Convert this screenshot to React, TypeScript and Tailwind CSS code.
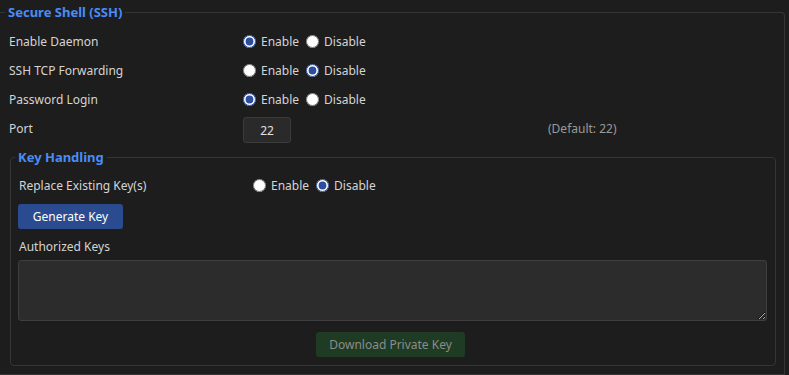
import { useState } from 'react';

type Choice = 'enable' | 'disable';

function RadioPair({ name, value, onChange }: { name: string; value: Choice; onChange: (v: Choice) => void }) {
  return (
    <div className="flex items-center">
      <label className="flex items-center gap-[5px] mr-[7px]">
        <input
          type="radio"
          name={name}
          checked={value === 'enable'}
          onChange={() => onChange('enable')}
          className="m-0 w-[13px] h-[13px] accent-[#2d4e9d]"
        />
        <span>Enable</span>
      </label>
      <label className="flex items-center gap-[5px]">
        <input
          type="radio"
          name={name}
          checked={value === 'disable'}
          onChange={() => onChange('disable')}
          className="m-0 w-[13px] h-[13px] accent-[#2d4e9d]"
        />
        <span>Disable</span>
      </label>
    </div>
  );
}

function Row({ label, children, extra }: { label: string; children: React.ReactNode; extra?: React.ReactNode }) {
  return (
    <div className="grid grid-cols-[234px_305px_1fr] items-center h-[29px] pl-[4px]">
      <span>{label}</span>
      <div>{children}</div>
      <div className="text-[#9a9a9a]">{extra}</div>
    </div>
  );
}

export default function App() {
  const [daemon, setDaemon] = useState<Choice>('enable');
  const [forwarding, setForwarding] = useState<Choice>('disable');
  const [password, setPassword] = useState<Choice>('enable');
  const [replace, setReplace] = useState<Choice>('disable');
  const [port, setPort] = useState('22');
  const [keys, setKeys] = useState('');

  return (
    <div
      className="min-h-[375px] bg-[#1d1d1d] text-[#d4d4d4] text-[12px] leading-4"
      style={{ fontFamily: '"Noto Sans", "Open Sans", sans-serif' }}
    >
      <fieldset className="mr-[4px] border border-l-0 border-[#353535] rounded-tr-[4px] pl-[5px] pr-[8px] pb-2">
        <legend className="px-[3px] text-[13px] leading-6 font-bold text-[#4a8cf7]">Secure Shell (SSH)</legend>
        <div className="pt-[3px]">
          <Row label="Enable Daemon">
            <RadioPair name="daemon" value={daemon} onChange={setDaemon} />
          </Row>
          <Row label="SSH TCP Forwarding">
            <RadioPair name="forwarding" value={forwarding} onChange={setForwarding} />
          </Row>
          <Row label="Password Login">
            <RadioPair name="password" value={password} onChange={setPassword} />
          </Row>
          <Row label="Port" extra="(Default: 22)">
            <input
              value={port}
              onChange={(e) => setPort(e.target.value)}
              className="w-[48px] h-[26px] mt-[3px] bg-[#2a2a2a] border border-[#3b3b3b] rounded-[3px] text-center text-[#e0e0e0] outline-none"
            />
          </Row>
        </div>

        <fieldset className="mt-[2px] ml-[5px] border border-[#353535] rounded-[4px] pl-[4px] pr-[8px] pb-[8px]">
          <legend className="px-[3px] text-[13px] leading-6 font-bold text-[#4a8cf7]">Key Handling</legend>
          <div className="pt-[2px]">
            <Row label="Replace Existing Key(s)">
              <RadioPair name="replace" value={replace} onChange={setReplace} />
            </Row>
          </div>
          <div className="pl-[3px]">
            <button className="mt-[4px] w-[105px] h-[25px] rounded-[3px] bg-[#2b4b90] text-white">Generate Key</button>
            <div className="mt-[10px] pl-[1px]">Authorized Keys</div>
            <textarea
              value={keys}
              onChange={(e) => setKeys(e.target.value)}
              className="block mt-[5px] w-full h-[61px] bg-[#2c2c2c] border border-[#3e3e3e] rounded-[3px] outline-none resize-y text-[#e0e0e0] p-1"
            />
            <div className="flex justify-center mt-[11px] pr-[4px]">
              <button disabled className="w-[149px] h-[25px] rounded-[3px] bg-[#1f3b23] text-[#8b8b8b]">
                Download Private Key
              </button>
            </div>
          </div>
        </fieldset>
      </fieldset>
    </div>
  );
}
